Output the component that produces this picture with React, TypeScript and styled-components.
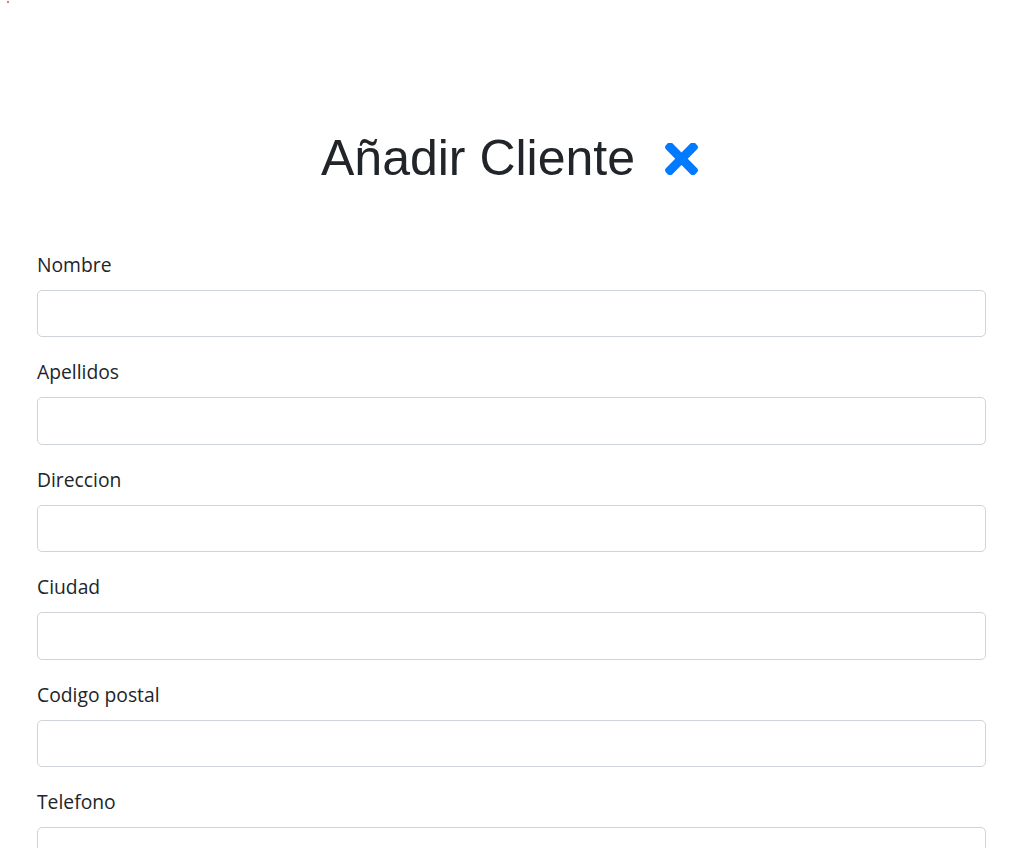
import React from 'react';
import styled, { createGlobalStyle } from 'styled-components';

const GlobalStyle = createGlobalStyle`
  html, body {
    margin: 0;
    padding: 0;
    background: #fff;
  }
  body {
    font-family: "Open Sans", "Noto Sans", "Liberation Sans", sans-serif;
    color: #212529;
  }
  * {
    box-sizing: border-box;
  }
`;

const fields = ['Nombre', 'Apellidos', 'Direccion', 'Ciudad', 'Codigo postal', 'Telefono'];

const App: React.FC = () => {
  return (
    <>
      <GlobalStyle />
      <Page>
        <Dot />
        <Title>
          Añadir Cliente
          <CloseButton type="button" aria-label="Cerrar">
            <svg width="33" height="31.5" viewBox="0 89 352 334" fill="#007bff">
              <path d="M242.72 256l100.07-100.07c12.28-12.28 12.28-32.19 0-44.48l-22.24-22.24c-12.28-12.28-32.19-12.28-44.48 0L176 189.28 75.93 89.21c-12.28-12.28-32.19-12.28-44.48 0L9.21 111.45c-12.28 12.28-12.28 32.19 0 44.48L109.28 256 9.21 356.07c-12.28 12.28-12.28 32.19 0 44.48l22.24 22.24c12.28 12.28 32.2 12.28 44.48 0L176 322.72l100.07 100.07c12.28 12.28 32.2 12.28 44.48 0l22.24-22.24c12.28-12.28 12.28-32.19 0-44.48L242.72 256z" />
            </svg>
          </CloseButton>
        </Title>

        <Form>
          {fields.map((f) => (
            <FormGroup key={f}>
              <Label>{f}</Label>
              <Input type="text" />
            </FormGroup>
          ))}
        </Form>
      </Page>
    </>
  );
};

const Page = styled.div`
  position: relative;
  padding: 128px 43px 40px 37px;
`;

const Dot = styled.span`
  position: absolute;
  left: 7px;
  top: 1px;
  width: 2px;
  height: 2px;
  border-radius: 50%;
  background: #e8463a;
`;

const Title = styled.h1`
  margin: 0 0 61.5px;
  padding-right: 4px;
  display: flex;
  align-items: center;
  justify-content: center;
  gap: 30px;
  font-family: "Liberation Sans", Arial, sans-serif;
  font-size: 50px;
  font-weight: 400;
  line-height: 60px;
  color: #212529;
`;

const CloseButton = styled.button`
  border: 0;
  padding: 0;
  margin-top: 2px;
  background: none;
  display: flex;
  cursor: pointer;
`;

const Form = styled.form`
  display: flex;
  flex-direction: column;
`;

const FormGroup = styled.div`
  display: flex;
  flex-direction: column;
  margin-bottom: 20px;
`;

const Label = styled.label`
  font-size: 19.3px;
  line-height: 30px;
  margin-bottom: 10px;
  color: #212529;
`;

const Input = styled.input`
  width: 100%;
  height: 47.5px;
  padding: 7.5px 15px;
  font-size: 20px;
  color: #495057;
  background: #fff;
  border: 1.25px solid #ced4da;
  border-radius: 5px;
  outline: none;
`;

export default App;
